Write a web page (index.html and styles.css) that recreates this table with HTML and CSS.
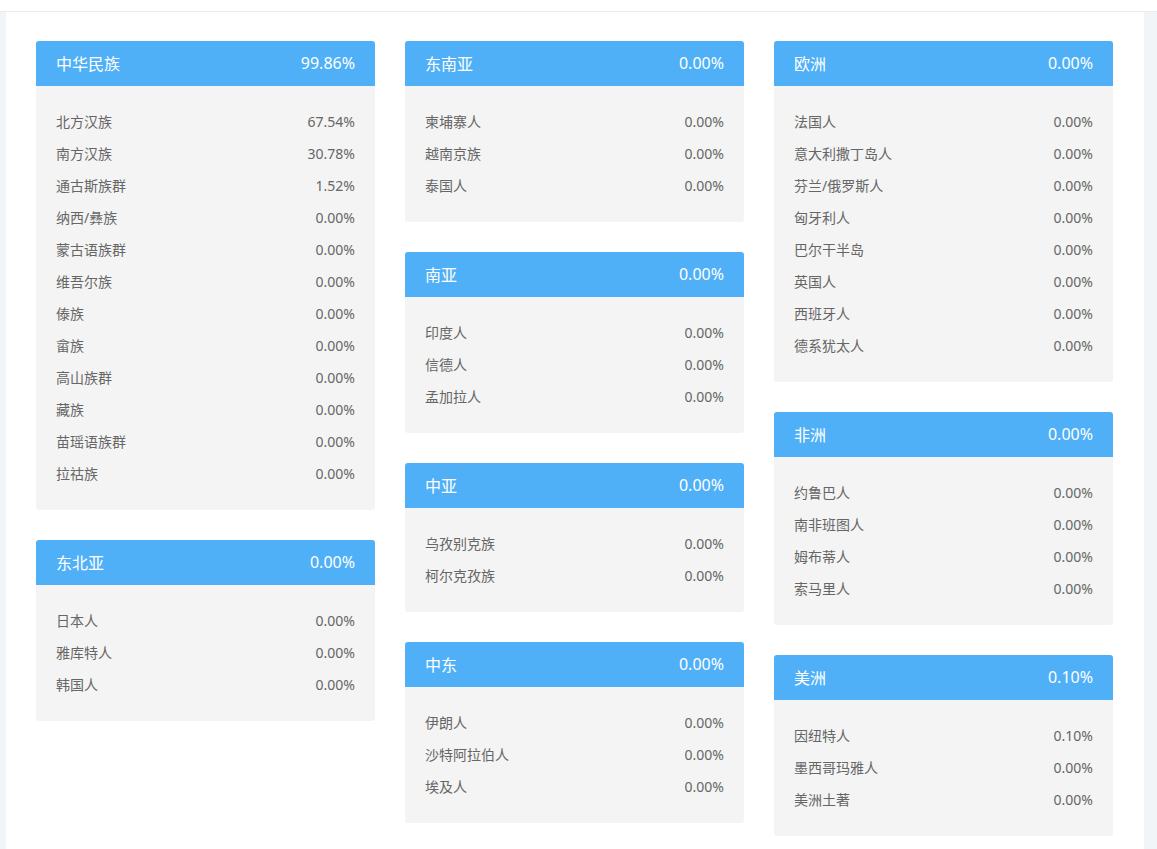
FILE: index.html
```html
<!DOCTYPE html>
<html lang="zh-CN">
<head>
<meta charset="utf-8">
<title>民族构成</title>
<link rel="stylesheet" href="styles.css">
</head>
<body>
<div class="topbar"></div>
<div class="main">
  <div class="col">
    <div class="card">
      <div class="card-head"><span>中华民族</span><span>99.86%</span></div>
      <div class="card-body">
        <div class="row"><span>北方汉族</span><span>67.54%</span></div>
        <div class="row"><span>南方汉族</span><span>30.78%</span></div>
        <div class="row"><span>通古斯族群</span><span>1.52%</span></div>
        <div class="row"><span>纳西/彝族</span><span>0.00%</span></div>
        <div class="row"><span>蒙古语族群</span><span>0.00%</span></div>
        <div class="row"><span>维吾尔族</span><span>0.00%</span></div>
        <div class="row"><span>傣族</span><span>0.00%</span></div>
        <div class="row"><span>畲族</span><span>0.00%</span></div>
        <div class="row"><span>高山族群</span><span>0.00%</span></div>
        <div class="row"><span>藏族</span><span>0.00%</span></div>
        <div class="row"><span>苗瑶语族群</span><span>0.00%</span></div>
        <div class="row"><span>拉祜族</span><span>0.00%</span></div>
      </div>
    </div>
    <div class="card">
      <div class="card-head"><span>东北亚</span><span>0.00%</span></div>
      <div class="card-body">
        <div class="row"><span>日本人</span><span>0.00%</span></div>
        <div class="row"><span>雅库特人</span><span>0.00%</span></div>
        <div class="row"><span>韩国人</span><span>0.00%</span></div>
      </div>
    </div>
  </div>
  <div class="col">
    <div class="card">
      <div class="card-head"><span>东南亚</span><span>0.00%</span></div>
      <div class="card-body">
        <div class="row"><span>柬埔寨人</span><span>0.00%</span></div>
        <div class="row"><span>越南京族</span><span>0.00%</span></div>
        <div class="row"><span>泰国人</span><span>0.00%</span></div>
      </div>
    </div>
    <div class="card">
      <div class="card-head"><span>南亚</span><span>0.00%</span></div>
      <div class="card-body">
        <div class="row"><span>印度人</span><span>0.00%</span></div>
        <div class="row"><span>信德人</span><span>0.00%</span></div>
        <div class="row"><span>孟加拉人</span><span>0.00%</span></div>
      </div>
    </div>
    <div class="card">
      <div class="card-head"><span>中亚</span><span>0.00%</span></div>
      <div class="card-body">
        <div class="row"><span>乌孜别克族</span><span>0.00%</span></div>
        <div class="row"><span>柯尔克孜族</span><span>0.00%</span></div>
      </div>
    </div>
    <div class="card">
      <div class="card-head"><span>中东</span><span>0.00%</span></div>
      <div class="card-body">
        <div class="row"><span>伊朗人</span><span>0.00%</span></div>
        <div class="row"><span>沙特阿拉伯人</span><span>0.00%</span></div>
        <div class="row"><span>埃及人</span><span>0.00%</span></div>
      </div>
    </div>
  </div>
  <div class="col">
    <div class="card">
      <div class="card-head"><span>欧洲</span><span>0.00%</span></div>
      <div class="card-body">
        <div class="row"><span>法国人</span><span>0.00%</span></div>
        <div class="row"><span>意大利撒丁岛人</span><span>0.00%</span></div>
        <div class="row"><span>芬兰/俄罗斯人</span><span>0.00%</span></div>
        <div class="row"><span>匈牙利人</span><span>0.00%</span></div>
        <div class="row"><span>巴尔干半岛</span><span>0.00%</span></div>
        <div class="row"><span>英国人</span><span>0.00%</span></div>
        <div class="row"><span>西班牙人</span><span>0.00%</span></div>
        <div class="row"><span>德系犹太人</span><span>0.00%</span></div>
      </div>
    </div>
    <div class="card">
      <div class="card-head"><span>非洲</span><span>0.00%</span></div>
      <div class="card-body">
        <div class="row"><span>约鲁巴人</span><span>0.00%</span></div>
        <div class="row"><span>南非班图人</span><span>0.00%</span></div>
        <div class="row"><span>姆布蒂人</span><span>0.00%</span></div>
        <div class="row"><span>索马里人</span><span>0.00%</span></div>
      </div>
    </div>
    <div class="card">
      <div class="card-head"><span>美洲</span><span>0.10%</span></div>
      <div class="card-body">
        <div class="row"><span>因纽特人</span><span>0.10%</span></div>
        <div class="row"><span>墨西哥玛雅人</span><span>0.00%</span></div>
        <div class="row"><span>美洲土著</span><span>0.00%</span></div>
      </div>
    </div>
  </div>
</div>
</body>
</html>
```
FILE: styles.css
```css
html, body {
  margin: 0;
  padding: 0;
}
*, *::before, *::after {
  box-sizing: border-box;
}
body {
  background: #f2f5f8;
  font-family: "Noto Sans", "Noto Sans CJK SC", sans-serif;
  color: #666;
  overflow: hidden;
}
.topbar {
  height: 12px;
  background: #fff;
  border-bottom: 1px solid #e8eaed;
}
.main {
  margin-left: 6px;
  width: 1138px;
  min-height: calc(100vh - 12px);
  background: #fff;
  padding: 29px 31px 30px 30px;
  display: grid;
  grid-template-columns: 339px 339px 339px;
  column-gap: 30px;
  align-items: start;
}
.col {
  display: flex;
  flex-direction: column;
  gap: 30px;
}
.card {
  border-radius: 3px;
  overflow: hidden;
  background: #f4f4f4;
}
.card-head {
  height: 45px;
  background: #4fb0f7;
  color: #fff;
  font-size: 16px;
  display: flex;
  align-items: center;
  justify-content: space-between;
  padding: 0 20px 2px;
}
.card-body {
  padding: 20px 20px;
}
.row {
  height: 32px;
  display: flex;
  align-items: center;
  justify-content: space-between;
  font-size: 14px;
  color: #666;
  padding-bottom: 2px;
}
```
